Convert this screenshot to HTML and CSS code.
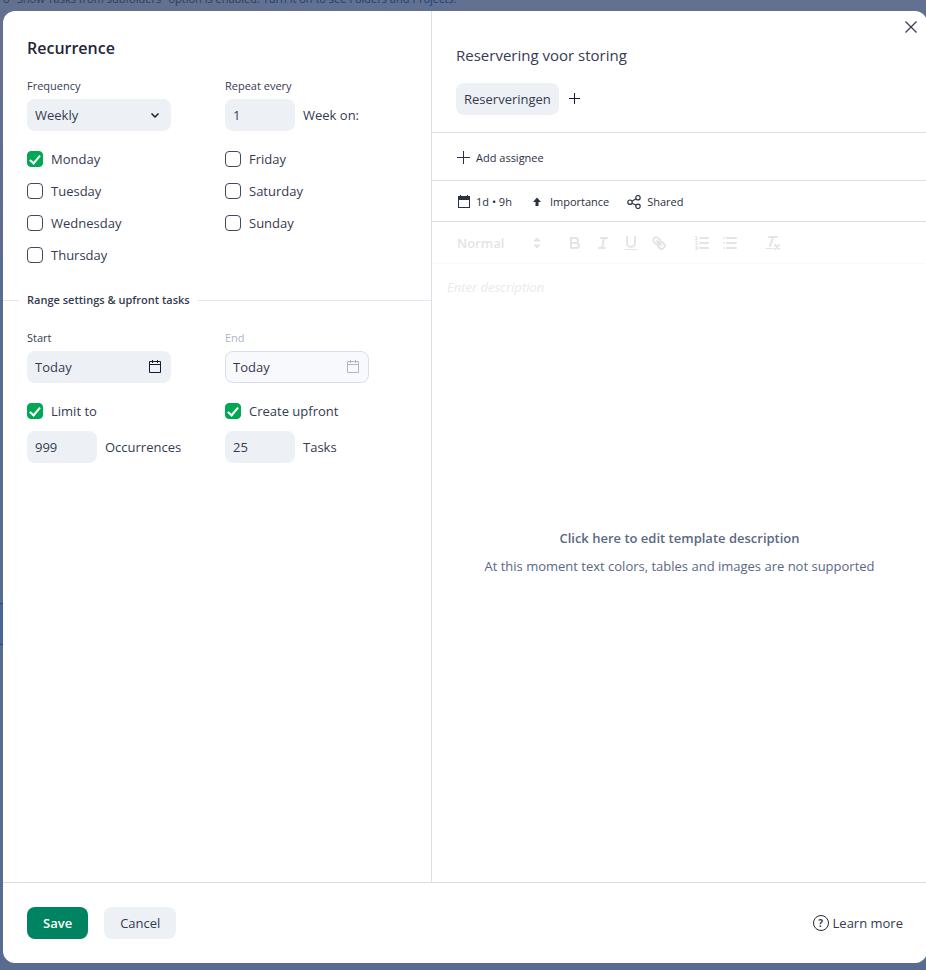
FILE: index.html
```html
<!DOCTYPE html>
<html lang="en">
<head>
<meta charset="utf-8">
<meta name="viewport" content="width=device-width, initial-scale=1">
<title>Recurrence</title>
<link rel="stylesheet" href="styles.css">
</head>
<body>
<div class="backdrop">
  <div class="notice"><p class="notice-text">to "Show Tasks from subfolders" option is enabled. <a class="notice-link" href="#">Turn it on to see Folders and Projects.</a></p></div>
  <main class="dialog">
    <div class="dialog-body">
      <section class="settings">
        <h1 class="title">Recurrence</h1>
        <div class="fields">
          <div class="field">
            <label class="label" for="frequency">Frequency</label>
            <div class="control">
              <select class="box" id="frequency"><option>Weekly</option></select>
              <svg class="control-icon" width="16" height="16" viewBox="0 0 16 16"><path d="M4.500 6.500 8 10l3.500-3.500" fill="none" stroke="currentColor" stroke-width="1.500"/></svg>
            </div>
          </div>
          <div class="field">
            <label class="label" for="interval">Repeat every</label>
            <div class="inline"><input class="box box-small" id="interval" type="text" value="1"><span>Week on:</span></div>
          </div>
        </div>
        <div class="days">
          <label class="check"><input type="checkbox" checked>Monday</label>
          <label class="check"><input type="checkbox">Tuesday</label>
          <label class="check"><input type="checkbox">Wednesday</label>
          <label class="check"><input type="checkbox">Thursday</label>
          <label class="check"><input type="checkbox">Friday</label>
          <label class="check"><input type="checkbox">Saturday</label>
          <label class="check"><input type="checkbox">Sunday</label>
        </div>
        <h2 class="divider">Range settings &amp; upfront tasks</h2>
        <div class="fields">
          <div class="field">
            <label class="label" for="start">Start</label>
            <div class="control">
              <input class="box" id="start" type="text" value="Today">
              <svg class="control-icon" width="16" height="16" viewBox="0 0 16 16" fill="none" stroke="currentColor"><path d="M2.500 2.500h11v11h-11zM2.500 5.500h11M5.500 1v3M10.500 1v3"/></svg>
            </div>
          </div>
          <div class="field field-off">
            <label class="label" for="end">End</label>
            <div class="control">
              <input class="box" id="end" type="text" value="Today" disabled>
              <svg class="control-icon" width="16" height="16" viewBox="0 0 16 16" fill="none" stroke="currentColor"><path d="M2.500 2.500h11v11h-11zM2.500 5.500h11M5.500 1v3M10.500 1v3"/></svg>
            </div>
          </div>
        </div>
        <div class="limits">
          <div>
            <label class="check"><input type="checkbox" checked>Limit to</label>
            <div class="inline"><input class="box box-small" id="occurrences" type="text" value="999"><label for="occurrences">Occurrences</label></div>
          </div>
          <div>
            <label class="check"><input type="checkbox" checked>Create upfront</label>
            <div class="inline"><input class="box box-small" id="tasks" type="text" value="25"><label for="tasks">Tasks</label></div>
          </div>
        </div>
      </section>

      <section class="template">
        <button class="close" type="button" aria-label="Close"><svg width="12" height="12" viewBox="0 0 12 12"><path d="M.5.5l11 11M11.500.5l-11 11" stroke="currentColor" stroke-width="1.200"/></svg></button>
        <header class="template-head">
          <h2 class="template-title">Reservering voor storing</h2>
          <div class="tags">
            <button class="chip" type="button">Reserveringen</button>
            <button class="plain" type="button" aria-label="Add tag"><svg width="12" height="12" viewBox="0 0 12 12"><path d="M5.500 0v11M0 5.500h11" stroke="currentColor"/></svg></button>
          </div>
        </header>
        <div class="row row-assignee">
          <button class="plain meta" type="button"><svg width="14" height="14" viewBox="0 0 14 14"><path d="M7.500 0v13M1 6.500h13" stroke="currentColor"/></svg>Add assignee</button>
        </div>
        <div class="row row-meta">
          <button class="plain meta" type="button"><svg width="14" height="14" viewBox="0 0 14 14"><path d="M2 1h2V0h1v1h6V0h1v1h2v12H2zM3 5v7h10V5z" fill="currentColor" fill-rule="evenodd"/></svg>1d • 9h</button>
          <button class="plain meta" type="button"><svg width="14" height="14" viewBox="0 0 14 14"><path d="M7 2.500 11 7H8.500v4h-3V7H3z" fill="currentColor"/></svg>Importance</button>
          <button class="plain meta" type="button"><svg width="14" height="14" viewBox="0 0 14 14" fill="none" stroke="currentColor" stroke-width="1.200"><circle cx="3" cy="7.200" r="2.200"/><circle cx="11" cy="2.700" r="2.200"/><circle cx="11" cy="11.300" r="2.200"/><path d="m5 6.200 4.100-2.400M5 8.300l4.100 2"/></svg>Shared</button>
        </div>
        <div class="editor">
          <div class="toolbar">
            <div class="format">Normal<svg width="18" height="18" viewBox="0 0 18 18" fill="currentColor" stroke="currentColor" stroke-linejoin="round"><path d="m6 11 3 3 3-3zM6 7l3-3 3 3z"/></svg></div>
            <div class="tools">
              <button class="tool" type="button" aria-label="Bold"><svg viewBox="0 0 18 18"><path d="M5 4h4.500a2.500 2.500 0 0 1 0 5H5zM5 9h5.500a2.500 2.500 0 0 1 0 5H5z"/></svg></button>
              <button class="tool" type="button" aria-label="Italic"><svg viewBox="0 0 18 18"><path d="M7 4h6M5 14h6M8 14l2-10"/></svg></button>
              <button class="tool" type="button" aria-label="Underline"><svg viewBox="0 0 18 18"><path d="M5 3v6a4 4 0 0 0 8 0V3"/><path class="thin" d="M3 15.500h12"/></svg></button>
              <button class="tool" type="button" aria-label="Link"><svg viewBox="0 0 18 18"><path d="m7 7 4 4M8.900 4.577a3.476 3.476 0 0 1 .36 4.679A3.476 3.476 0 0 1 4.577 8.900C3.185 7.500 2.035 6.400 4.217 4.217S7.500 3.185 8.900 4.577zM13.423 9.100a3.476 3.476 0 0 0-4.679-.36 3.476 3.476 0 0 0 .36 4.679c1.392 1.392 2.500 2.542 4.679.36S14.815 10.500 13.423 9.100z"/></svg></button>
            </div>
            <div class="tools">
              <button class="tool" type="button" aria-label="Numbered list"><svg viewBox="0 0 18 18"><path d="M7 4h8M7 9h8M7 14h8"/><path class="thin" d="M2.500 2.500h1v3M2.500 5.500h2M2.500 7.500h2l-2 3h2M2.500 12.500h2v3h-2M3 14h1.500"/></svg></button>
              <button class="tool" type="button" aria-label="Bulleted list"><svg viewBox="0 0 18 18"><path d="M6 4h9M6 9h9M6 14h9M3 4h0M3 9h0M3 14h0"/></svg></button>
            </div>
            <div class="tools">
              <button class="tool" type="button" aria-label="Clear formatting"><svg viewBox="0 0 18 18"><path d="M5 3h8M6 12l3.350-9M11 11l4 4M15 11l-4 4"/><path class="thin" d="M2 14.500h7"/></svg></button>
            </div>
          </div>
          <p class="placeholder">Enter description</p>
          <button class="edit-overlay" type="button"><strong>Click here to edit template description</strong><span>At this moment text colors, tables and images are not supported</span></button>
        </div>
      </section>
    </div>
    <footer class="footer">
      <button class="button button-primary" type="button">Save</button>
      <button class="button" type="button">Cancel</button>
      <a class="help" href="#"><span class="help-mark">?</span>Learn more</a>
    </footer>
  </main>
</div>
</body>
</html>
```
FILE: styles.css
```css
*, *::before, *::after { box-sizing: border-box; }

body {
  margin: 0;
  overflow-x: hidden;
  font: 13px/20px "Open Sans", "Noto Sans", sans-serif;
  color: #353b50;
}

button, input, select {
  margin: 0;
  font: inherit;
  color: inherit;
}

button { border: 0; background: none; cursor: pointer; }
svg { display: block; flex: none; }
h1, h2, p { margin: 0; }

.backdrop {
  display: flex;
  flex-direction: column;
  min-height: 100vh;
  padding: 0 0 7px 3px;
  background: linear-gradient(#62718f 0 50px, #596b90 300px 603px, #2d4778 603px 604px, #48659b 604px 644px, #2d4778 644px 645px, #596b90 645px);
}

.notice {
  display: flex;
  align-items: flex-end;
  height: 11px;
  overflow: hidden;
}

.notice-text {
  margin: 0 0 4px -4px;
  font-size: 11px;
  line-height: 16px;
  white-space: nowrap;
  color: #303c58;
}

.notice-link { color: #173f80; text-decoration: none; }

.dialog {
  display: flex;
  flex: 1;
  flex-direction: column;
  margin-right: -1px;
  border-radius: 12px;
  background: #fff;
}

.dialog-body { display: flex; flex: 1; }

.settings {
  flex: 0 0 429px;
  padding: 25px 0 24px;
  border-right: 1px solid #d8dfe9;
}

.title {
  margin: 0 24px 18px;
  font-size: 16px;
  line-height: 24px;
  font-weight: 600;
  color: #22273a;
}

.fields, .limits, .days {
  display: grid;
  grid-template-columns: 174px 1fr;
  column-gap: 24px;
  margin: 0 24px 12px;
}

.days {
  grid-template-rows: repeat(4, 32px);
  grid-auto-flow: column;
  margin-bottom: 19px;
}

.field { display: grid; gap: 5px; justify-items: start; }
.label { font-size: 11px; line-height: 16px; }

.control { position: relative; width: 144px; }

.control-icon {
  position: absolute;
  top: 8px;
  right: 8px;
  color: #161b2f;
  pointer-events: none;
}

.box {
  display: block;
  width: 100%;
  height: 32px;
  padding: 0 8px;
  border: 0;
  border-radius: 8px;
  background: #edf0f5;
  appearance: none;
}

.box-small { width: 70px; }

.field-off .label, .field-off .control-icon { color: #adb5c8; }
.field-off .box { padding: 0 7px; border: 1px solid #d8dfea; background: #f8f9fc; }

.inline { display: flex; align-items: center; gap: 8px; }

.check { display: flex; align-items: center; gap: 8px; height: 32px; }

.check input {
  display: grid;
  place-items: center;
  width: 16px;
  height: 16px;
  border: 1px solid #42485e;
  border-radius: 4px;
  appearance: none;
}

.check input:checked { border-color: #00a854; background: #00a854; }

.check input:checked::before {
  content: "";
  width: 6px;
  height: 11px;
  margin-bottom: 2px;
  border: solid #fff;
  border-width: 0 2px 2px 0;
  transform: rotate(40deg);
}

.divider {
  display: flex;
  align-items: center;
  gap: 8px;
  margin-bottom: 20px;
  font-size: 11px;
  line-height: 20px;
  font-weight: 600;
}

.divider::before, .divider::after { content: ""; height: 1px; background: #e3e7ec; }
.divider::before { width: 16px; }
.divider::after { flex: 1; }

.limits { margin-bottom: 0; }
.limits > div { display: grid; gap: 4px; }

.template {
  position: relative;
  display: flex;
  flex: 1;
  flex-direction: column;
  min-width: 0;
}

.close {
  position: absolute;
  top: 10px;
  right: 10px;
  padding: 0;
}

.template-head, .row { padding: 0 24px; border-bottom: 1px solid #dcdee2; }
.template-head { padding: 32px 24px 17px; }
.template-title { margin-bottom: 16px; font-size: 15px; line-height: 24px; font-weight: 400; }

.tags { display: flex; align-items: center; gap: 10px; }

.chip {
  height: 32px;
  padding: 0 8px;
  border-radius: 8px;
  background: #edf0f5;
}

.plain { padding: 0; color: #161b2f; }

.row { display: flex; align-items: center; gap: 18px; font-size: 11px; }
.row-assignee { height: 48px; padding-top: 2px; }
.row-meta { height: 41px; padding-top: 2px; }
.meta { display: flex; align-items: center; gap: 6px; color: #2b3044; }

.editor { position: relative; flex: 1; }

.toolbar {
  display: flex;
  align-items: center;
  gap: 15px;
  height: 42px;
  padding: 0 16px;
  border-bottom: 1px solid #fafafa;
  color: #e4e4e6;
}

.format {
  display: flex;
  align-items: center;
  justify-content: space-between;
  width: 98px;
  padding-left: 9px;
  font-weight: 600;
}

.tools { display: flex; }
.tool { width: 28px; padding: 3px 5px; }
.tool svg { fill: none; stroke: currentColor; stroke-width: 2; stroke-linecap: round; stroke-linejoin: round; }
.tool .thin { stroke-width: 1; }

.placeholder { padding: 13px 15px; font-style: italic; color: #eaeaec; }

.edit-overlay {
  position: absolute;
  inset: 0;
  display: flex;
  flex-direction: column;
  align-items: center;
  justify-content: center;
  gap: 8px;
  color: #5a6883;
}

.edit-overlay strong { font-weight: 600; }

.footer {
  display: flex;
  align-items: center;
  gap: 16px;
  padding: 24px;
  border-top: 1px solid #d9dde2;
}

.button {
  height: 32px;
  padding: 0 16px;
  border-radius: 8px;
  background: #edf0f5;
}

.button-primary { background: #008360; font-weight: 600; color: #fff; }

.help {
  display: flex;
  align-items: center;
  gap: 4px;
  margin-left: auto;
  color: inherit;
  text-decoration: none;
}

.help-mark {
  width: 16px;
  height: 16px;
  border: 1px solid #22273a;
  border-radius: 50%;
  font-size: 10px;
  line-height: 14px;
  font-weight: 700;
  text-align: center;
}
```
